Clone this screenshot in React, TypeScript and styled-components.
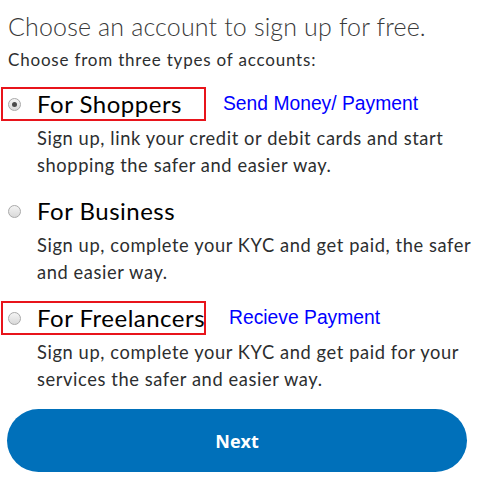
import React, { useState } from "react";
import styled, { createGlobalStyle } from "styled-components";

const GlobalStyle = createGlobalStyle`
  body {
    margin: 0;
    background: #fff;
    font-family: Lato, "Open Sans", sans-serif;
  }
`;

type Account = {
  id: string;
  label: string;
  text: string;
  link?: string;
  linkGap?: number;
  boxed?: boolean;
};

const accounts: Account[] = [
  {
    id: "shoppers",
    label: "For Shoppers",
    text: "Sign up, link your credit or debit cards and start shopping the safer and easier way.",
    link: "Send Money/ Payment",
    linkGap: 17,
    boxed: true,
  },
  {
    id: "business",
    label: "For Business",
    text: "Sign up, complete your KYC and get paid, the safer and easier way.",
  },
  {
    id: "freelancers",
    label: "For Freelancers",
    text: "Sign up, complete your KYC and get paid for your services the safer and easier way.",
    link: "Recieve Payment",
    linkGap: 23,
    boxed: true,
  },
];

export default function App() {
  const [selected, setSelected] = useState("shoppers");

  return (
    <Page>
      <GlobalStyle />
      <Title>Choose an account to sign up for free.</Title>
      <Subtitle>Choose from three types of accounts:</Subtitle>
      <OptionList>
        {accounts.map((a) => (
          <Option key={a.id}>
            <OptionHead>
              <Highlight $boxed={!!a.boxed}>
                <Radio
                  type="radio"
                  name="account"
                  checked={selected === a.id}
                  onChange={() => setSelected(a.id)}
                />
                <Label>{a.label}</Label>
              </Highlight>
              {a.link && (
                <SideLink href="#" $gap={a.linkGap ?? 17}>
                  {a.link}
                </SideLink>
              )}
            </OptionHead>
            <Desc>{a.text}</Desc>
          </Option>
        ))}
      </OptionList>
      <NextButton>Next</NextButton>
    </Page>
  );
}

const Page = styled.div`
  width: 485px;
  padding: 10px 2px 0 8px;
  box-sizing: border-box;
`;

const Title = styled.h1`
  margin: 0;
  font-size: 25px;
  font-weight: 300;
  letter-spacing: 0.15px;
  color: #3a3a3a;
  line-height: 32px;
`;

const Subtitle = styled.p`
  margin: 8px 0 0;
  font-size: 17px;
  letter-spacing: 0.8px;
  color: #2c2e2f;
  line-height: 20px;
`;

const OptionList = styled.div`
  display: flex;
  flex-direction: column;
  gap: 15px;
  margin-top: 17px;
`;

const Option = styled.div`
  display: flex;
  flex-direction: column;
`;

const OptionHead = styled.div`
  display: flex;
  align-items: center;
`;

const Highlight = styled.div<{ $boxed: boolean }>`
  display: flex;
  align-items: center;
  gap: 16px;
  width: 205px;
  height: 34px;
  margin-left: -7px;
  padding-left: 5px;
  box-sizing: border-box;
  border: 2px solid ${(p) => (p.$boxed ? "#e8141b" : "transparent")};
`;

const Radio = styled.input`
  appearance: none;
  margin: 0;
  width: 13px;
  height: 13px;
  border-radius: 50%;
  border: 1px solid #a9a9a9;
  background: linear-gradient(#f4f4f4, #d9d9d9);
  box-sizing: border-box;
  position: relative;
  flex-shrink: 0;

  &:checked::after {
    content: "";
    position: absolute;
    left: 3px;
    top: 3px;
    width: 5px;
    height: 5px;
    border-radius: 50%;
    background: #4a4a4a;
  }
`;

const Label = styled.span`
  font-size: 24px;
  letter-spacing: 0.5px;
  color: #000;
  line-height: 30px;
  white-space: nowrap;
`;

const SideLink = styled.a<{ $gap: number }>`
  margin-left: ${(p) => p.$gap}px;
  font-family: "Liberation Sans", Arial, sans-serif;
  font-size: 19.3px;
  color: #0000ff;
  text-decoration: none;
`;

const Desc = styled.p`
  margin: 4px 0 0 29px;
  font-size: 18.3px;
  letter-spacing: 0.6px;
  line-height: 27px;
  color: #2c2e2f;
`;

const NextButton = styled.button`
  display: block;
  width: 460px;
  height: 63px;
  margin: 16px 0 0 -1px;
  border: none;
  border-radius: 32px;
  background: #0070ba;
  color: #fff;
  font-family: "Open Sans", sans-serif;
  font-size: 18px;
  font-weight: 700;
  cursor: pointer;
`;
